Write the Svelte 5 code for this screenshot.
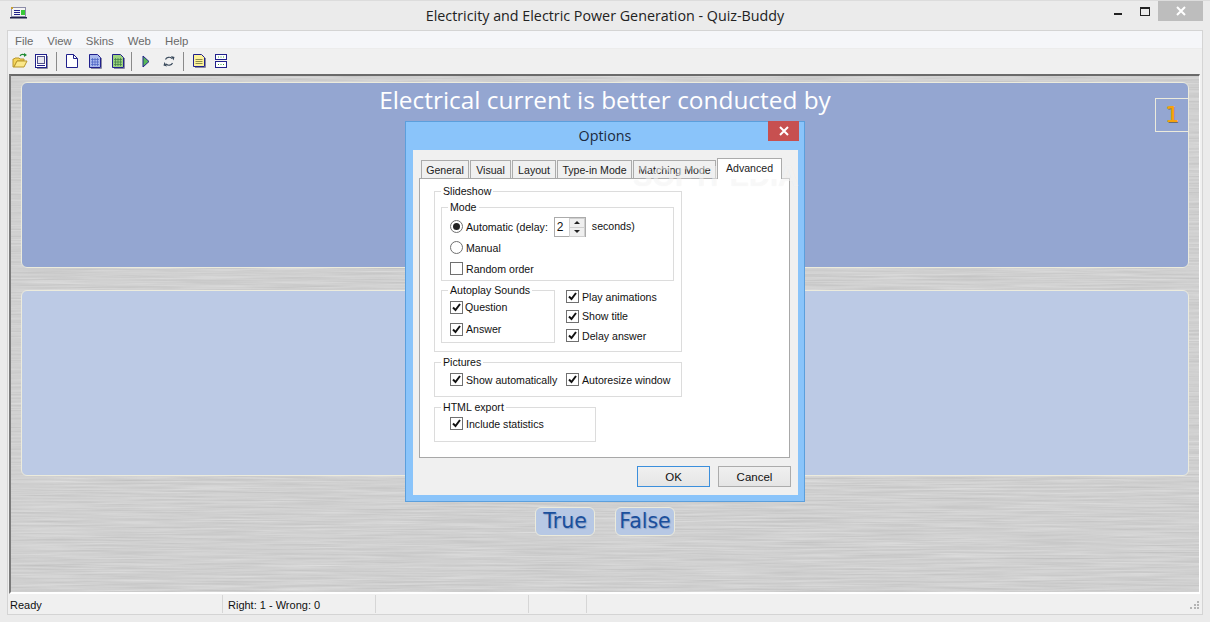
<script>
  let menus = ["File", "View", "Skins", "Web", "Help"];
  let tabs = [
    { label: "General", w: 48 },
    { label: "Visual", w: 41 },
    { label: "Layout", w: 44 },
    { label: "Type-in Mode", w: 75 },
    { label: "Matching Mode", w: 83 }
  ];
</script>

<div class="window">
  <header class="titlebar">
    <div class="appicon">
      <svg width="17" height="13" viewBox="0 0 17 13">
        <rect x="1.500" y="1.500" width="14" height="9" fill="#f4f4f4" stroke="#8c8ca8" />
        <rect x="0" y="11" width="17" height="1.500" fill="#20204a" />
        <path d="M4 4.500h6M4 6.500h6M4 8.500h6" stroke="#20208a" />
        <rect x="11" y="4" width="4" height="5" fill="#37c837" />
        <rect x="1" y="1" width="2" height="2" fill="#c8a030" />
      </svg>
    </div>
    <div class="title">Electricity and Electric Power Generation - Quiz-Buddy</div>
    <div class="controls">
      <span class="min"></span>
      <span class="max"></span>
      <span class="close">
        <svg width="10" height="10" viewBox="0 0 10 10"><path d="M1 1l8 8M9 1l-8 8" stroke="#fff" stroke-width="2" /></svg>
      </span>
    </div>
  </header>

  <div class="client">
    <nav class="menubar">
      {#each menus as m}
        <span>{m}</span>
      {/each}
    </nav>

    <div class="toolbar">
      <div class="tg a">
        <svg width="16" height="16" viewBox="0 0 16 16">
          <path d="M1 14V6h1l1-1h4l1 1h4v2H5l-3 6z" fill="#f6d65a" stroke="#b8962a" />
          <path d="M2 14l3-6h10l-3 6z" fill="#fbe88a" stroke="#b8962a" />
          <path d="M8 3c1-2 3-2 5-1" fill="none" stroke="#1e8a32" stroke-width="1.200" />
          <path d="M12 0l3 2-3 2z" fill="#1e8a32" />
        </svg>
        <svg width="16" height="16" viewBox="0 0 16 16">
          <rect x="2.500" y="1.500" width="11" height="13" fill="#fff" stroke="#20208c" />
          <rect x="4.500" y="3.500" width="7" height="7" fill="#e8e8f0" stroke="#50508c" />
          <path d="M4 12.500h8" stroke="#20208c" />
          <path d="M14.500 3v12.500H4" fill="none" stroke="#8a8aa0" />
        </svg>
      </div>
      <span class="sep s1"></span>
      <div class="tg">
        <svg width="16" height="16" viewBox="0 0 16 16">
          <path d="M2.500 1.500h7l4 4v9h-11z" fill="#fff" stroke="#20208c" />
          <path d="M9.500 1.500v4h4" fill="none" stroke="#20208c" />
        </svg>
        <svg width="16" height="16" viewBox="0 0 16 16">
          <path d="M2.500 1.500h8l3 3v10h-11z" fill="#a9b9ec" stroke="#20208c" />
          <path d="M4 6.500h8M4 9h8M4 11.500h8M5.500 5v8M8 5v8M10.500 5v8" stroke="#4a62c4" stroke-opacity="0.7" />
          <path d="M14.500 5v10.500H4" fill="none" stroke="#8a8aa0" />
        </svg>
        <svg width="16" height="16" viewBox="0 0 16 16">
          <path d="M2.500 1.500h8l3 3v10h-11z" fill="#9ed27e" stroke="#20208c" />
          <path d="M4 6.500h8M4 9h8M4 11.500h8M5.500 5v8M8 5v8M10.500 5v8" stroke="#3c7a46" stroke-opacity="0.7" />
          <path d="M14.500 5v10.500H4" fill="none" stroke="#8a8aa0" />
        </svg>
      </div>
      <span class="sep s2"></span>
      <div class="tg">
        <svg width="16" height="16" viewBox="0 0 16 16">
          <path d="M5 3l6 5.500L5 14z" fill="#58b858" stroke="#20208c" />
        </svg>
        <svg width="16" height="16" viewBox="0 0 16 16">
          <path d="M4.500 6.500c1-2.500 4.500-3 6.500-1" fill="none" stroke="#3a4a5c" stroke-width="1.200" />
          <path d="M10 3l3.500 1-1 3.500z" fill="#3a4a5c" />
          <path d="M11.500 10c-1 2.500-4.500 3-6.500 1" fill="none" stroke="#3a4a5c" stroke-width="1.200" />
          <path d="M6 13.500L2.500 12.500l1-3.500z" fill="#3a4a5c" />
        </svg>
      </div>
      <span class="sep s3"></span>
      <div class="tg c">
        <svg width="16" height="16" viewBox="0 0 16 16">
          <path d="M2.500 1.500h8l3 3v9h-11z" fill="#fdf29a" stroke="#20208c" />
          <path d="M4.500 6.500h7M4.500 8.500h7M4.500 10.500h7" stroke="#8a8a50" />
          <path d="M14.500 5v9.500H4" fill="none" stroke="#8a8aa0" />
        </svg>
        <svg width="16" height="16" viewBox="0 0 16 16">
          <rect x="2.500" y="1.500" width="11" height="5" fill="#fff" stroke="#20208c" />
          <rect x="2.500" y="8.500" width="11" height="6" fill="#fff" stroke="#20208c" />
          <path d="M5 4h1M7.500 4h1M10 4h1M5 11.500h1M7.500 11.500h1M10 11.500h1" stroke="#3aa03a" />
        </svg>
      </div>
    </div>

    <main class="stage">
      <!-- brushed metal skin -->
      <svg class="metal" width="100%" height="100%">
        <filter id="brushed" x="0" y="0" width="100%" height="100%" color-interpolation-filters="sRGB">
          <feTurbulence type="fractalNoise" baseFrequency="0.012 0.55" numOctaves="3" seed="7" />
          <feColorMatrix values="0.13 0 0 0 0.75  0.13 0 0 0 0.75  0.13 0 0 0 0.75  0 0 0 0 1" />
        </filter>
        <rect width="100%" height="100%" filter="url(#brushed)" />
      </svg>
      <section class="panel question">
        <h1>Electrical current is better conducted by</h1>
        <div class="counter">1</div>
      </section>
      <section class="panel answer"></section>
      <div class="choices">
        <button class="choice">True</button>
        <button class="choice">False</button>
      </div>
    </main>

    <footer class="statusbar">
      <span class="pane first">Ready</span>
      <span class="pane second">Right: 1 - Wrong: 0</span>
      <span class="pane third"></span>
      <span class="pane fourth"></span>
      <svg class="grip" width="11" height="11" viewBox="0 0 11 11">
        <path d="M8 0h2v2H8zM5 3h2v2H5zM8 3h2v2H8zM1 6h2v2H1zM5 6h2v2H5zM8 6h2v2H8z" fill="#b4b4b4" />
      </svg>
    </footer>
  </div>

  <div class="dialog">
    <div class="dlg-title">
      Options
      <span class="dlg-close">
        <svg width="10" height="10" viewBox="0 0 10 10"><path d="M1 1l8 8M9 1l-8 8" stroke="#fff" stroke-width="2" /></svg>
      </span>
    </div>
    <div class="dlg-body">
      <div class="tabs">
        {#each tabs as t}
          <span class="tab" style="width: {t.w}px;">{t.label}</span>
        {/each}
        <span class="tab active">Advanced</span>
      </div>
      <div class="page">
        <div class="group slideshow">
          <span class="legend">Slideshow</span>
          <div class="group mode">
            <span class="legend">Mode</span>
            <div class="row">
              <span class="radio on"></span>
              <span>Automatic (delay:</span>
              <span class="spin">
                <span class="spin-val">2</span>
                <span class="spin-btns">
                  <i class="up"></i>
                  <i class="down"></i>
                </span>
              </span>
              <span class="spin-after">seconds)</span>
            </div>
            <div class="row"><span class="radio"></span><span>Manual</span></div>
            <div class="row"><span class="check"></span><span>Random order</span></div>
          </div>
          <div class="sounds">
            <div class="group autoplay">
              <span class="legend">Autoplay Sounds</span>
              <div class="row tall">{@render box()}<span class="tight">Question</span></div>
              <div class="row tall">{@render box()}<span>Answer</span></div>
            </div>
            <div class="stack">
              <div class="row">{@render box()}<span>Play animations</span></div>
              <div class="row">{@render box()}<span>Show title</span></div>
              <div class="row">{@render box()}<span>Delay answer</span></div>
            </div>
          </div>
        </div>
        <div class="group pictures">
          <span class="legend">Pictures</span>
          <div class="cols">
            <div class="row">{@render box()}<span>Show automatically</span></div>
            <div class="row">{@render box()}<span>Autoresize window</span></div>
          </div>
        </div>
        <div class="group export">
          <span class="legend">HTML export</span>
          <div class="row">{@render box()}<span>Include statistics</span></div>
        </div>
      </div>
      <div class="buttons">
        <button class="btn default">OK</button>
        <button class="btn">Cancel</button>
      </div>
    </div>
    <div class="watermark">SOFTPEDIA</div>
  </div>
</div>

{#snippet box()}
  <span class="check">
    <svg width="11" height="11" viewBox="0 0 11 11"><path d="M2 5.500l2.500 2.500L9 2" fill="none" stroke="#111" stroke-width="2" /></svg>
  </span>
{/snippet}

<style>
  :global(body) {
    margin: 0;
    background: #ebebeb;
  }

  .window {
    position: relative;
    width: 1210px;
    height: 622px;
    overflow: hidden;
    background: #ebebeb;
    font-family: "Liberation Sans", Arial, sans-serif;
    font-size: 10.600px;
    color: #111;
  }

  .titlebar {
    display: grid;
    grid-template-columns: 1fr auto 1fr;
    align-items: center;
    height: 30px;
    box-sizing: border-box;
    border-top: 1px solid #dcdcdc;
  }

  .appicon {
    padding-left: 10px;
    height: 13px;
    margin-top: -6px;
  }

  .title {
    font-family: "Open Sans", sans-serif;
    font-size: 14.300px;
    color: #222;
  }

  .controls {
    display: flex;
    justify-content: flex-end;
    align-self: start;
    padding-right: 7px;
  }

  .min {
    width: 8px;
    height: 2px;
    background: #222;
    margin: 12px 18px 0 0;
  }

  .max {
    width: 8px;
    height: 6px;
    border: 1px solid #222;
    border-top-width: 2px;
    margin: 6px 8px 0 0;
  }

  .close {
    display: flex;
    align-items: center;
    justify-content: center;
    width: 45px;
    height: 20px;
    background: #bdbdbd;
  }

  .client {
    display: flex;
    flex-direction: column;
    width: 1196px;
    height: 585px;
    margin-left: 7px;
    box-sizing: border-box;
    border: 1px solid #d4d4d4;
    background: #f0f0f0;
  }

  .menubar {
    display: flex;
    align-items: center;
    gap: 14px;
    height: 18px;
    padding: 2px 0 0 7px;
    box-sizing: border-box;
    background: #f5f6f9;
    border-bottom: 1px solid #ececec;
    color: #6a6a6a;
    font-size: 11.400px;
  }

  .toolbar {
    display: flex;
    align-items: center;
    height: 25px;
    box-sizing: border-box;
    padding: 0 0 1px 4px;
    background: #f0f0f0;
  }

  .tg {
    display: flex;
    gap: 7px;
  }

  .tg.a {
    gap: 5px;
  }

  .tg.c {
    gap: 6px;
  }

  .sep {
    width: 1px;
    height: 19px;
    background: #8a8a8a;
  }

  .s1 {
    margin: 0 7px;
  }

  .s2 {
    margin: 0 6px 0 5px;
  }

  .s3 {
    margin: 0 7px 0 6px;
  }

  .stage {
    position: relative;
    flex: 1;
    display: flex;
    flex-direction: column;
    align-items: center;
    min-height: 0;
    margin-left: 1px;
    margin-right: 2px;
    padding-top: 6px;
    border-top: 2px solid #6a6a6a;
    border-left: 2px solid #7a7a7a;
    border-right: 1px solid #fff;
    border-bottom: 2px solid #fff;
    background-color: #d0d0d0;
  }

  .metal {
    position: absolute;
    left: 0;
    top: 0;
  }

  .panel {
    position: relative;
    width: 1168px;
    height: 186px;
    flex: none;
    box-sizing: border-box;
    border: 1px solid #ecebdc;
    border-radius: 6px;
  }

  .question {
    background: #94a6d1;
  }

  .question h1 {
    margin: 0;
    padding-top: 1px;
    text-align: center;
    font-family: "Open Sans", sans-serif;
    font-weight: 400;
    font-size: 24.400px;
    line-height: 32px;
    color: #fff;
  }

  .counter {
    position: absolute;
    right: -1px;
    top: 15px;
    width: 34px;
    height: 34px;
    box-sizing: border-box;
    border: 1px solid #ecebdc;
    text-align: center;
    font-family: "DejaVu Sans", sans-serif;
    font-size: 22px;
    line-height: 32px;
    color: #f6a20a;
    text-shadow: 0.5px 0 0 #f6a20a, 1px 1px 0 #6c6c6c;
  }

  .answer {
    margin-top: 22px;
    background: #bccae5;
  }

  .choices {
    position: relative;
    display: flex;
    gap: 20px;
    margin-top: 31px;
  }

  .choice {
    width: 60px;
    height: 29px;
    padding: 0 0 2px;
    border: 1px solid #ecebdc;
    border-radius: 6px;
    background: #b7c8e4;
    font-family: "DejaVu Sans", sans-serif;
    font-size: 20.500px;
    color: #1a4f9c;
    text-shadow: 1px 1px 1px #8aa0c8;
  }

  .statusbar {
    position: relative;
    display: flex;
    align-items: center;
    height: 20px;
    flex: none;
    font-size: 11px;
  }

  .pane {
    height: 18px;
    line-height: 21px;
    box-sizing: border-box;
    border-right: 1px solid #d6d6d6;
  }

  .first {
    width: 215px;
    padding-left: 2px;
  }

  .second {
    width: 153px;
    padding-left: 5px;
  }

  .third {
    width: 153px;
  }

  .fourth {
    width: 58px;
  }

  .grip {
    position: absolute;
    right: 2px;
    bottom: 2px;
  }

  .dialog {
    position: absolute;
    left: 405px;
    top: 121px;
    width: 400px;
    height: 381px;
    box-sizing: border-box;
    background: #8ac4fa;
    border: 1px solid #5c9fdc;
    display: flex;
    flex-direction: column;
  }

  .dlg-title {
    position: relative;
    height: 28px;
    flex: none;
    text-align: center;
    font-family: "Open Sans", sans-serif;
    font-size: 14.300px;
    line-height: 28px;
    color: #1c2a3e;
  }

  .dlg-close {
    position: absolute;
    right: 5px;
    top: -1px;
    display: flex;
    align-items: center;
    justify-content: center;
    width: 31px;
    height: 20px;
    background: #c75050;
  }

  .dlg-body {
    flex: 1;
    margin: 0 6px 6px 7px;
    padding: 8px 8px 0 6px;
    background: #f0f0f0;
  }

  .tabs {
    display: flex;
    align-items: flex-end;
    height: 20px;
    padding-left: 2px;
    gap: 1px;
  }

  .tab {
    height: 18px;
    line-height: 18px;
    border: 1px solid #ababab;
    border-bottom: 0;
    background: #f0f0f0;
    color: #222;
    text-align: center;
    white-space: nowrap;
    box-sizing: border-box;
  }

  .tab.active {
    width: 65px;
    height: 21px;
    margin-bottom: -1px;
    line-height: 18px;
    background: #fff;
    z-index: 1;
  }

  .page {
    height: 280px;
    box-sizing: border-box;
    padding: 12px 0 0 14px;
    background: #fff;
    border: 1px solid #a8a8a8;
  }

  .group {
    position: relative;
    box-sizing: border-box;
    border: 1px solid #dcdcdc;
  }

  .legend {
    position: absolute;
    top: -8px;
    left: 6px;
    padding: 0 2px;
    background: #fff;
    line-height: 14px;
  }

  .slideshow {
    width: 248px;
    height: 161px;
    padding: 15px 0 0 6px;
  }

  .mode {
    width: 233px;
    height: 74px;
    padding: 8px 0 0 8px;
  }

  .row {
    display: flex;
    align-items: center;
    height: 21px;
    gap: 3px;
  }

  .row.tall {
    height: 22px;
  }

  .tight {
    margin-left: -1px;
  }

  .radio {
    position: relative;
    width: 13px;
    height: 13px;
    box-sizing: border-box;
    border: 1px solid #707070;
    border-radius: 50%;
    background: #fff;
    flex: none;
  }

  .radio.on::after {
    content: "";
    position: absolute;
    left: 2px;
    top: 2px;
    width: 7px;
    height: 7px;
    border-radius: 50%;
    background: #222;
  }

  .check {
    display: flex;
    width: 13px;
    height: 13px;
    box-sizing: border-box;
    border: 1px solid #707070;
    background: #fff;
    flex: none;
  }

  .spin {
    display: flex;
    width: 32px;
    height: 20px;
    box-sizing: border-box;
    margin-left: 3px;
    border: 1px solid #ababab;
    background: #fff;
  }

  .spin-val {
    flex: 1;
    padding-left: 2px;
    line-height: 18px;
    font-size: 12px;
  }

  .spin-btns {
    display: flex;
    flex-direction: column;
    width: 16px;
  }

  .spin-btns i {
    flex: 1;
    position: relative;
    background: #efefef;
    border: 1px solid #cfcfcf;
    margin-bottom: -1px;
  }

  .spin-btns i::after {
    content: "";
    position: absolute;
    left: 4px;
    top: 2px;
    border-left: 3px solid transparent;
    border-right: 3px solid transparent;
  }

  .spin-btns .up::after {
    border-bottom: 3px solid #222;
  }

  .spin-btns .down::after {
    border-top: 3px solid #222;
  }

  .spin-after {
    margin-left: 3px;
    margin-top: -1px;
  }

  .sounds {
    display: flex;
    padding-top: 6px;
  }

  .autoplay {
    width: 114px;
    height: 53px;
    margin-top: 3px;
    padding: 5px 0 0 8px;
  }

  .stack {
    margin-left: 11px;
  }

  .stack .row {
    height: 19.500px;
  }

  .pictures {
    width: 248px;
    height: 35px;
    margin-top: 10px;
    padding: 6px 0 0 15px;
  }

  .cols {
    display: grid;
    grid-template-columns: 116px auto;
  }

  .export {
    width: 162px;
    height: 35px;
    margin-top: 10px;
    padding: 5px 0 0 15px;
  }

  .buttons {
    display: flex;
    justify-content: flex-end;
    gap: 8px;
    margin-top: 8px;
    margin-right: -1px;
  }

  .btn {
    width: 73px;
    height: 21px;
    padding: 0;
    border: 1px solid #acacac;
    background: linear-gradient(#f0f0f0, #e5e5e5);
    font-family: inherit;
    font-size: 11.500px;
    color: #111;
  }

  .btn.default {
    border-color: #3c8fdc;
  }

  .watermark {
    position: absolute;
    left: 227px;
    top: 38px;
    font-family: "Liberation Sans", sans-serif;
    font-size: 29px;
    line-height: 32px;
    font-weight: 700;
    color: rgba(255, 255, 255, 0.5);
    text-shadow: 0 0 1px rgba(0, 0, 0, 0.06);
    pointer-events: none;
  }
</style>
